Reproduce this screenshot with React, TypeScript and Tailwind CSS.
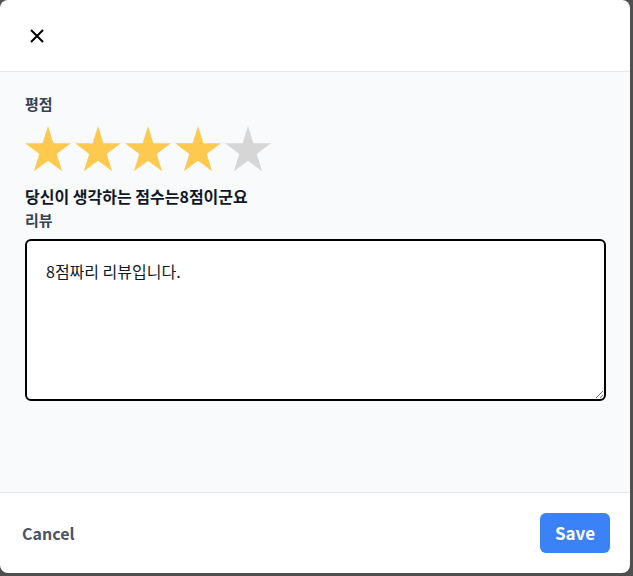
import { useState } from "react";

const STAR_PATH =
  "M24 1 L29.39 17.58 L46.83 17.58 L32.72 27.83 L38.11 44.42 L24 34.17 L9.89 44.42 L15.28 27.83 L1.17 17.58 L18.61 17.58 Z";

const Star = ({ filled }: { filled: boolean }) => (
  <svg width="48" height="46" viewBox="0 0 48 46" preserveAspectRatio="none" className="h-[48px]">
    <path d={STAR_PATH} fill={filled ? "#fdca4f" : "#d6d6d6"} />
  </svg>
);

export default function App() {
  const [rating] = useState(4);
  const [review, setReview] = useState("8점짜리 리뷰입니다.");

  return (
    <div
      className="w-[633px] h-[576px] bg-[#4f4f4f] overflow-hidden"
      style={{ fontFamily: '"Noto Sans CJK KR", "Noto Sans", sans-serif' }}
    >
      <div className="w-[630px] h-[573px] bg-white rounded-lg flex flex-col overflow-hidden">
        {/* Header */}
        <div className="h-[72px] shrink-0 border-b border-gray-200 flex items-center pl-[29px]">
          <button className="w-4 h-4 flex items-center justify-center text-black">
            <svg width="16" height="16" viewBox="0 0 16 16" fill="none">
              <path d="M2 2 L14 14 M14 2 L2 14" stroke="currentColor" strokeWidth="2" />
            </svg>
          </button>
        </div>

        {/* Body */}
        <div className="flex-1 bg-gray-50 pl-[25px] pr-[24px] pt-[22px]">
          <div className="text-[15px] leading-5 font-bold text-gray-700">평점</div>
          <div className="flex gap-[2px] mt-[11px] -ml-px">
            {[1, 2, 3, 4, 5].map((n) => (
              <Star key={n} filled={n <= rating} />
            ))}
          </div>
          <div className="mt-[12px] text-base leading-[22px] font-bold text-gray-900">
            당신이 생각하는 점수는8점이군요
          </div>
          <div className="mt-[3px] text-[15px] leading-5 font-bold text-gray-700">리뷰</div>
          <textarea
            value={review}
            onChange={(e) => setReview(e.target.value)}
            className="mt-[9px] block w-full h-[162px] border-2 border-black rounded-md bg-white px-[19px] pt-[18px] pb-[16px] text-base leading-6 text-gray-900 outline-none"
          />
        </div>

        {/* Footer */}
        <div className="h-[81px] shrink-0 border-t border-gray-200 flex items-center justify-between pl-[22px] pr-[20px]">
          <button className="text-base font-bold text-gray-600">Cancel</button>
          <button className="w-[70px] h-[40px] rounded-md bg-[#3b82f6] text-white text-[17px] font-bold">
            Save
          </button>
        </div>
      </div>
    </div>
  );
}
